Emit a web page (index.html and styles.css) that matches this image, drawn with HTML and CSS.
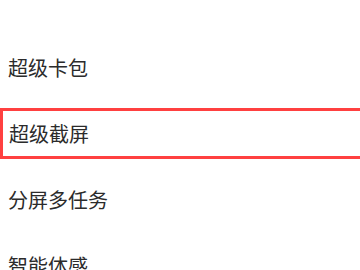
FILE: index.html
```html
<!DOCTYPE html>
<html lang="zh">
<head>
    <meta charset="UTF-8">
    <meta name="viewport" content="width=device-width, initial-scale=1.0">
    <title>设置</title>
    <link rel="stylesheet" href="styles.css">
</head>
<body>
<ul class="menu">
    <li class="item"><span class="label">超级卡包</span></li>
    <li class="item selected">
        <div class="frame"><span class="label">超级截屏</span></div>
    </li>
    <li class="item"><span class="label">分屏多任务</span></li>
    <li class="item"><span class="label">智能体感</span></li>
</ul>
</body>
</html>
```

FILE: styles.css
```css
body {
    margin: 0;
    padding: 0;
    background-color: #ffffff;
    font-family: "Noto Sans CJK SC", "Noto Sans", sans-serif;
    overflow: hidden;
}

.menu {
    list-style: none;
    margin: 0;
    padding: 34px 0 0 0;
}

.item {
    height: 66px;
    display: flex;
    align-items: center;
}

.label {
    padding-left: 8px;
    font-size: 20px;
    color: #2b2b2b;
}

/* highlighted row, frame runs off the right edge */
.item.selected .frame {
    flex: 1;
    height: 51px;
    margin-right: -8px;
    box-sizing: border-box;
    border: 3px solid #ff4040;
    display: flex;
    align-items: center;
}

.item.selected .label {
    padding-left: 6px;
}
```
